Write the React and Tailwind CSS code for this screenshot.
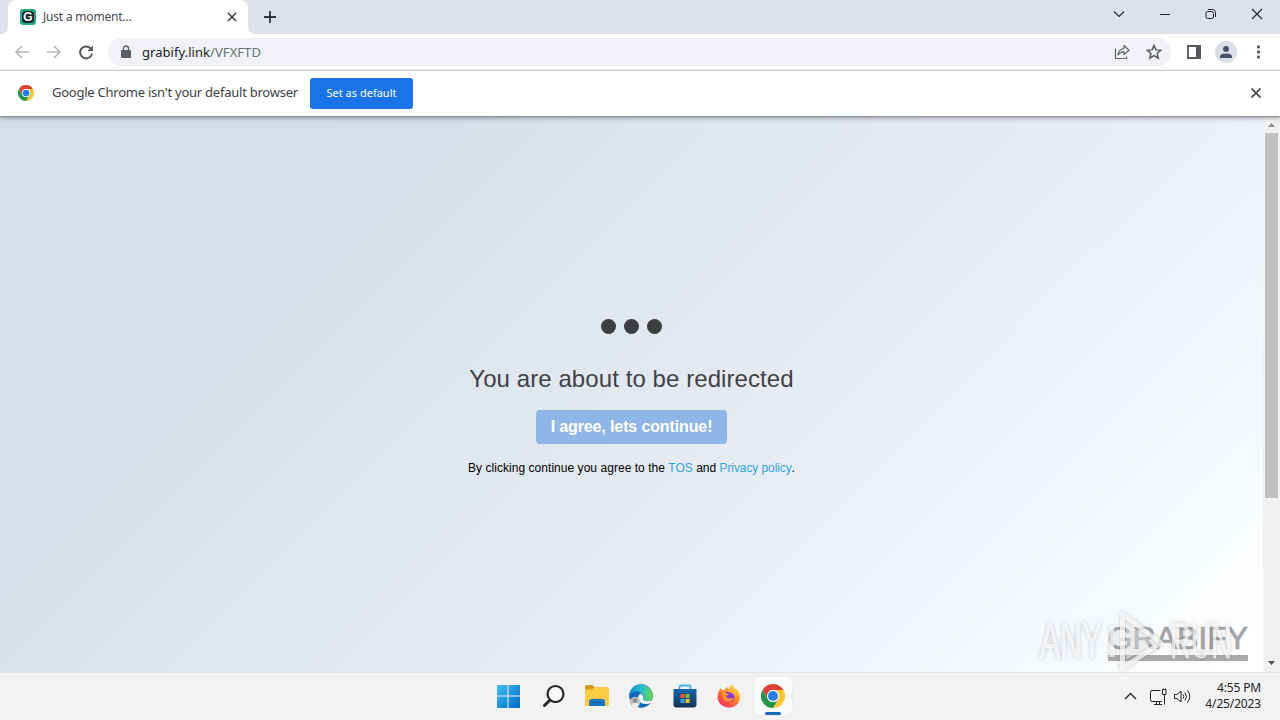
function Svg({ w, h, children, vb, className }) {
  return (
    <svg width={w} height={h} viewBox={vb || `0 0 ${w} ${h}`} fill="none" className={`shrink-0 ${className || ''}`}>
      {children}
    </svg>
  )
}

function ChromeLogo({ size }) {
  return (
    <Svg w={size} h={size} vb="0 0 48 48">
      <circle cx="24" cy="24" r="24" fill="#fff" />
      <path d="M3.2 12A24 24 0 0 1 44.8 12H24A12 12 0 0 0 13.6 18L13.6 30Z" fill="#dd4034" />
      <path d="M44.8 12A24 24 0 0 1 24 48L34.4 30A12 12 0 0 0 24 12Z" fill="#fcc934" />
      <path d="M3.2 12L13.6 30A12 12 0 0 0 34.4 30L24 48A24 24 0 0 1 3.2 12Z" fill="#24964b" />
      <circle cx="24" cy="24" r="12" fill="#fff" />
      <circle cx="24" cy="24" r="10" fill="#2b7de9" />
    </Svg>
  )
}

function TabStrip() {
  return (
    <div className="flex h-[34px] shrink-0 bg-[#dee1e9]">
      <Svg w={8} h={34}>
        <path d="M8 26V34H0Q8 34 8 26Z" fill="#fff" />
      </Svg>
      <div className="flex w-[240px] items-center rounded-t-lg bg-white pr-[11px] pl-3">
        <div className="flex h-4 w-4 items-center justify-center rounded-[3px] bg-[#26a785]">
          <div className="flex h-3 w-3 items-center justify-center rounded-[4px] bg-[#17252e] font-['Liberation_Sans',sans-serif] text-[12px] leading-none font-bold text-white">G</div>
        </div>
        <span className="ml-[7px] flex-1 text-[12px] tracking-[-0.2px] text-[#45494d]">Just a moment...</span>
        <Svg w={10} h={10}>
          <path d="M1 1L9 9M9 1L1 9" stroke="#3c4043" strokeWidth="1.6" />
        </Svg>
      </div>
      <Svg w={8} h={34}>
        <path d="M0 26V34H8Q0 34 0 26Z" fill="#fff" />
      </Svg>
      <div className="flex flex-1 items-center pl-[7px]">
        <Svg w={14} h={14}>
          <path d="M1 7H13M7 1V13" stroke="#303438" strokeWidth="1.8" />
        </Svg>
      </div>
      {/* Window controls */}
      <div className="flex w-[171px] items-start pt-2">
        <Svg w={171} h={14}>
          <path d="M5 3.5L10 8.5L15 3.5M51 6.5H61M143 1L153 11M153 1L143 11" stroke="#202124" strokeWidth="1.1" />
          <path d="M99 1.5H103.5Q106.5 1.5 106.5 4.5V9M98.5 3.5H102.5Q104.5 3.5 104.5 5.5V9Q104.5 10.5 103 10.5H98.5Q97 10.5 97 9V5Q97 3.5 98.5 3.5Z" stroke="#202124" />
        </Svg>
      </div>
    </div>
  )
}

function Toolbar() {
  return (
    <div className="flex h-[37px] shrink-0 items-center border-b border-[#dcdde0] bg-white pl-[14px]">
      <Svg w={80} h={16}>
        <path d="M15 8H2M8 2L2 8L8 14" stroke="#b4b6b9" strokeWidth="1.6" />
        <path d="M33 8H46M40 2L46 8L40 14" stroke="#b4b6b9" strokeWidth="1.6" />
        <path d="M76.6 4.4A6 6 0 1 0 78 9.6" stroke="#55585c" strokeWidth="2" />
        <path d="M79 1.5V7H73.5Z" fill="#55585c" />
      </Svg>
      <div className="ml-[14px] flex h-7 w-[1063px] items-center rounded-full bg-[#f0f2f5] pl-[13px]">
        <Svg w={10} h={14}>
          <rect x="0" y="5" width="10" height="8" rx="1" fill="#5b5e63" />
          <path d="M2.5 5.5V3.5A2.5 2.5 0 0 1 7.5 3.5V5.5" stroke="#5b5e63" strokeWidth="1.4" />
        </Svg>
        <span className="relative top-px ml-[11px] flex-1 text-[13px] tracking-[0.05px] text-[#202124]">
          grabify.link<span className="text-[#6c7075]">/VFXFTD</span>
        </span>
        <Svg w={16} h={16}>
          <path d="M1.5 4.5V14.5H12.5V12.5" stroke="#606367" strokeWidth="1.2" />
          <path d="M4 11Q4.5 5 10 4.5V1.5L15 6.2L10 10.5V7.8Q6 7.5 4 11Z" stroke="#606367" strokeWidth="1.2" strokeLinejoin="round" />
        </Svg>
        <Svg w={16} h={16} className="mr-[9px] ml-4">
          <path d="M8 1.5L9.9 5.9L14.7 6.3L11.1 9.5L12.2 14.2L8 11.7L3.8 14.2L4.9 9.5L1.3 6.3L6.1 5.9Z" stroke="#55585c" strokeWidth="1.5" />
        </Svg>
      </div>
      <Svg w={14} h={14} className="ml-4">
        <path d="M1 1H13V13H1Z" stroke="#55585c" strokeWidth="1.8" />
        <rect x="9" y="0" width="5" height="14" fill="#55585c" />
      </Svg>
      <div className="ml-[14px] flex h-[22px] w-[22px] items-center justify-center rounded-full bg-[#dadee5]">
        <Svg w={12} h={12}>
          <circle cx="6" cy="3" r="3" fill="#45536c" />
          <path d="M0 12V10.5Q0 7.5 6 7.5Q12 7.5 12 10.5V12Z" fill="#45536c" />
        </Svg>
      </div>
      <Svg w={4} h={14} className="ml-[20px]">
        <rect x="0" y="0.5" width="3" height="3" rx="1" fill="#55585c" />
        <rect x="0" y="5.5" width="3" height="3" rx="1" fill="#55585c" />
        <rect x="0" y="10.5" width="3" height="3" rx="1" fill="#55585c" />
      </Svg>
    </div>
  )
}

function DefaultBrowserBar() {
  return (
    <div className="z-10 flex h-[46px] shrink-0 items-center border-b border-[#909296] bg-white pr-[19px] pb-px pl-[18px] shadow-[0_1px_4px_rgba(60,64,67,0.5)]">
      <ChromeLogo size={16} />
      <span className="ml-[18px] w-[258px] text-[13px] tracking-[-0.24px] whitespace-nowrap text-[#3c4043]">
        Google Chrome isn't your default browser
      </span>
      <button className="mt-px h-[31px] w-[103px] rounded-[3px] bg-[#1a73e8] text-[11px] text-white">Set as default</button>
      <div className="flex-1" />
      <Svg w={10} h={10}>
        <path d="M0.5 0.5L9.5 9.5M9.5 0.5L0.5 9.5" stroke="#4a4d51" strokeWidth="1.9" />
      </Svg>
    </div>
  )
}

function Watermark() {
  return (
    <Svg w={204} h={72} className="absolute top-[487px] left-[1034px] drop-shadow-[0_0_2px_rgba(90,90,90,0.45)]">
      <g fill="#fff" fillOpacity="0.65" stroke="#fff" strokeOpacity="0.5" fontFamily="Liberation Sans, sans-serif" fontSize="50">
        <text x="6" y="54" textLength="62" lengthAdjust="spacingAndGlyphs">ANY</text>
        <text x="136" y="54" textLength="62" lengthAdjust="spacingAndGlyphs">RUN</text>
      </g>
      <path d="M78 22V53M88.5 10.500V64L127 39Z" stroke="#fff" strokeOpacity="0.7" strokeWidth="5" strokeLinejoin="round" />
      <path d="M92 18V56L120 38Z" fill="#fff" fillOpacity="0.35" />
    </Svg>
  )
}

function Scrollbar() {
  return (
    <div className="flex w-[17px] flex-col items-center bg-[#f1f1f1]">
      <Svg w={17} h={16}>
        <path d="M5 10L8.5 6L12 10Z" fill="#8b8b8b" />
      </Svg>
      <div className="h-[365px] w-[13px] bg-[#c1c1c1]" />
      <Svg w={17} h={17} className="mt-auto">
        <path d="M5 6L8.5 10L12 6Z" fill="#505050" />
      </Svg>
    </div>
  )
}

function Page() {
  return (
    <div className="relative flex min-h-0 flex-1 font-['Liberation_Sans',Arial,sans-serif]">
      <main className="flex flex-1 flex-col items-center bg-[linear-gradient(135deg,#d7deea_0%,#d7dee9_25%,#dfe6ed_39%,#e5eaf2_54%,#eff3fb_76%,#f9fcfe_90%,#ffffff_100%)]">
        <div className="mt-[202px] flex gap-2">
          <span className="h-[15px] w-[15px] rounded-full bg-[#3d3e40]" />
          <span className="h-[15px] w-[15px] rounded-full bg-[#3d3e40]" />
          <span className="h-[15px] w-[15px] rounded-full bg-[#3d3e40]" />
        </div>
        <h1 className="mt-[29px] text-[24px] leading-[32px] tracking-[0.08px] text-[#404247]">You are about to be redirected</h1>
        <button className="mt-[15px] h-[34px] w-[191px] rounded-[4px] bg-[#8eb7e8] text-[16px] font-bold tracking-[-0.12px] text-white">
          I agree, lets continue!
        </button>
        <p className="mt-4 text-[12px] leading-4 text-black">
          <span className="tracking-[0.04px]">By clicking continue you agree to the </span>
          <a className="text-[#32a4d8]">TOS</a> and{' '}
          <a className="tracking-[-0.09px] text-[#32a4d8]">Privacy policy</a>.
        </p>
        <div className="mt-auto mr-[15px] mb-[11px] self-end border-b-[6px] border-[#aaaaaa] text-[32px] leading-[34px] text-[#a5a6a8] [-webkit-text-stroke:0.7px_#a5a6a8]">
          GRABIFY
        </div>
      </main>
      <Scrollbar />
      <Watermark />
    </div>
  )
}

function WindowsIcon() {
  return (
    <Svg w={24} h={24}>
      <defs>
        <linearGradient id="win" x1="0" y1="0" x2="24" y2="24" gradientUnits="userSpaceOnUse">
          <stop stopColor="#45c5f5" />
          <stop offset="1" stopColor="#0069c4" />
        </linearGradient>
      </defs>
      <path d="M1 1H11.5V11.5H1ZM12.5 1H24V11.5H12.5ZM1 12.5H11.5V24H1ZM12.5 12.5H24V24H12.5Z" fill="url(#win)" />
    </Svg>
  )
}

function SearchIcon() {
  return (
    <Svg w={24} h={24}>
      <circle cx="14.5" cy="10" r="8" fill="#f8f8f8" stroke="#252525" strokeWidth="2.2" />
      <path d="M9 16L3.500 21.500" stroke="#252525" strokeWidth="3" strokeLinecap="round" />
    </Svg>
  )
}

function FolderIcon() {
  return (
    <Svg w={24} h={24}>
      <path d="M0 3Q0 1 2 1H7.5L10 3.5L8 6H0Z" fill="#d99a16" />
      <path d="M0 5.5H7L10 3H22.5Q24 3 24 4.5V20.5Q24 22 22.5 22H1.5Q0 22 0 20.5Z" fill="#fbcb43" />
      <path d="M4 22V17.5Q4 15 6.5 15H17.5Q20 15 20 17.5V22Z" fill="#1875bf" />
      <path d="M7 18.5H17" stroke="#0c5796" />
    </Svg>
  )
}

function EdgeIcon() {
  return (
    <Svg w={26} h={26}>
      <defs>
        <linearGradient id="edgeTop" x1="2" y1="8" x2="24" y2="10" gradientUnits="userSpaceOnUse">
          <stop stopColor="#168fd8" />
          <stop offset="0.5" stopColor="#25bdc9" />
          <stop offset="1" stopColor="#67d454" />
        </linearGradient>
      </defs>
      <circle cx="13" cy="13" r="11.8" fill="#1464b4" />
      <path d="M1.2 13A11.9 11.9 0 0 1 24.9 12Q25 18 19 18Q15 18 15 16.5Q16.5 14.5 15.5 12Q13.5 8.5 9 8.5Q4 8.5 1.2 13Z" fill="url(#edgeTop)" />
      <path d="M10 15Q10 11.5 13 10.5Q16 12 15 16.5Q16 19.5 26 17Q22 21.5 18 21Q11 21 10 15Z" fill="#eef6fa" />
      <circle cx="7" cy="19" r="5.2" fill="#c3c3c1" />
      <circle cx="7" cy="17.5" r="2.2" fill="#8a8580" />
      <path d="M3.5 23Q4 20 7 20Q10.5 20 11 23Q7.500 25 3.5 23Z" fill="#ececec" />
    </Svg>
  )
}

function StoreIcon() {
  return (
    <Svg w={24} h={26}>
      <defs>
        <linearGradient id="store" x1="0" y1="6" x2="0" y2="25" gradientUnits="userSpaceOnUse">
          <stop stopColor="#1666a8" />
          <stop offset="1" stopColor="#173054" />
        </linearGradient>
      </defs>
      <path d="M6.500 7V4Q6.500 2.500 8 2.500H16Q17.500 2.500 17.500 4V7" stroke="#45b3e6" strokeWidth="1.8" />
      <path d="M0.5 6H23.5V21.5Q23.5 24.5 20.5 24.5H3.5Q0.5 24.5 0.5 21.5Z" fill="url(#store)" />
      <path d="M7.5 11H11.5V15H7.5Z" fill="#ef5726" />
      <path d="M12.5 11H16.5V15H12.5Z" fill="#83bc22" />
      <path d="M7.5 16H11.5V20H7.5Z" fill="#2aa8e5" />
      <path d="M12.5 16H16.5V20H12.5Z" fill="#fdbb27" />
    </Svg>
  )
}

function FirefoxIcon() {
  return (
    <Svg w={24} h={24}>
      <defs>
        <linearGradient id="fox" x1="20" y1="2" x2="5" y2="22" gradientUnits="userSpaceOnUse">
          <stop stopColor="#ffe14a" />
          <stop offset="0.45" stopColor="#ff8b25" />
          <stop offset="1" stopColor="#f0305b" />
        </linearGradient>
      </defs>
      <path d="M3.5 4L5 6.5L7.5 6L10 2.5Q10.5 5 12 5.5Q12.5 2 15.5 0.5Q16 3 18.5 5L20.5 5.5Q25 13 21.5 18.5Q18 24 11.5 23.5Q3.5 23 1 16Q-0.5 9.5 3.5 4Z" fill="url(#fox)" />
      <circle cx="12.2" cy="12.5" r="5.2" fill="#8b3bd0" />
      <path d="M5 9Q8 8 10 9.5L12 10Q11.500 11 9.500 11.500Q9 14 12 14.500Q15 14.5 16 13.5Q15.500 17.500 11.5 17.500Q5.5 17.5 5 9Z" fill="#ff9726" />
      <path d="M12 5.5Q17 7 17.5 12Q15.5 8 11 8Z" fill="#ffb52d" />
    </Svg>
  )
}

function Taskbar() {
  return (
    <footer className="flex h-12 shrink-0 border-t border-[#e6e6e6] bg-[#f2f2f2] pb-[2px]">
      <div className="flex flex-1 items-center pl-[496px]">
        <WindowsIcon />
        <div className="ml-[21px] flex items-center gap-5">
          <SearchIcon />
          <FolderIcon />
          <div className="-mx-px">
            <EdgeIcon />
          </div>
          <StoreIcon />
          <FirefoxIcon />
        </div>
        <div className="ml-[13px] flex h-[38px] w-[38px] flex-col items-center rounded-[4px] bg-[#fbfbfb] pt-[7px] shadow-[0_0_1px_rgba(0,0,0,0.2)]">
          <ChromeLogo size={24} />
          <div className="mt-[4px] h-[3px] w-4 shrink-0 rounded-full bg-[#176ab8]" />
        </div>
      </div>
      <div className="flex items-center pr-[19px] text-[#222222]">
        <Svg w={70} h={20} className="mr-[11px]">
          <path d="M1 13L6.5 7.5L12 13" stroke="#222" strokeWidth="1.4" />
          <path d="M36.5 4.5H28Q26.5 4.5 26.5 6V14Q26.5 15.5 28 15.5H38M30 18.5H38M32.5 16V18M35.5 16V18M38.5 3.5H42V8.5H38.5ZM40.5 8.5V18.5M39.5 2.5V4M41.5 2.5V4" stroke="#222" />
          <path d="M50.5 8.5H53L57 5V16L53 12.5H50.5ZM59 8.5Q60.5 10.5 59 12.5M61 6.5Q64 10.5 61 14.5M63.5 4.5Q68 10.5 63.5 16.5" stroke="#222" />
        </Svg>
        <div className="text-right text-[12px] leading-4 tracking-[-0.15px]">
          <div>4:55 PM</div>
          <div>4/25/2023</div>
        </div>
      </div>
    </footer>
  )
}

export default function App() {
  return (
    <div className="flex h-[720px] w-[1280px] flex-col overflow-hidden bg-white font-['Noto_Sans','Open_Sans',sans-serif]">
      <TabStrip />
      <Toolbar />
      <DefaultBrowserBar />
      <Page />
      <Taskbar />
    </div>
  )
}
